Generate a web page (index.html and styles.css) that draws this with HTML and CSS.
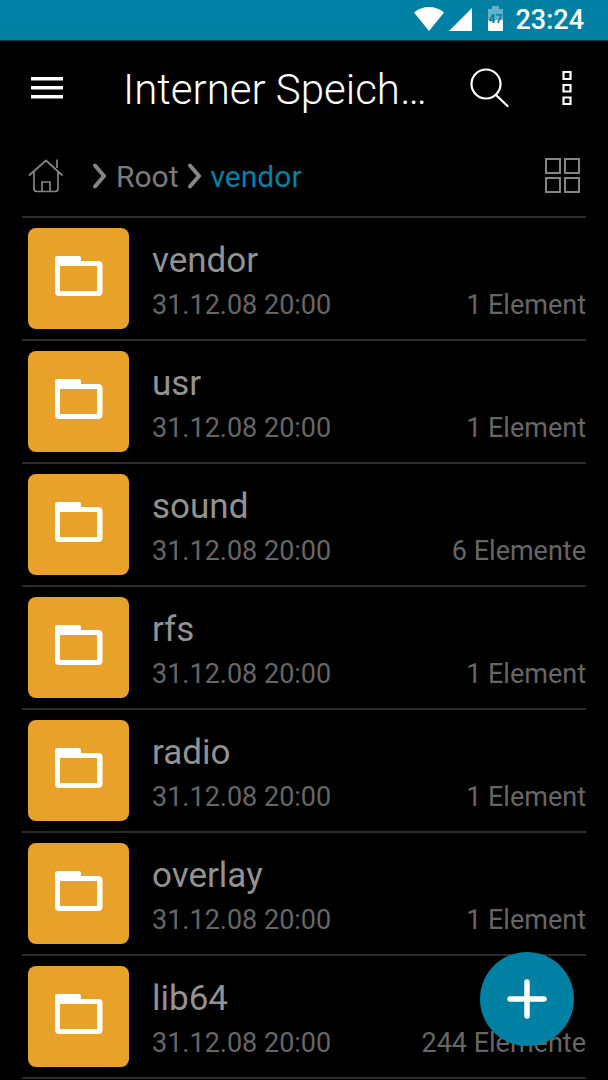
FILE: index.html
```html
<!DOCTYPE html>
<html lang="de">
<head>
<meta charset="utf-8">
<meta name="viewport" content="width=device-width, initial-scale=1">
<title>Interner Speicher</title>
<link rel="stylesheet" href="styles.css">
</head>
<body>
<svg class="sprite" aria-hidden="true">
  <symbol id="folder" viewBox="0 0 48 42">
    <path fill="currentColor" fill-rule="evenodd" d="M2 0H24Q26 0 26 2V5H43Q47.500 5 47.500 9V36Q47.500 40 43 40H4Q0 40 0 36V2Q0 0 2 0ZM5 10V35H42V10Z"/>
  </symbol>
  <symbol id="chevron" viewBox="0 0 16 28">
    <path d="M3 3.500L12 14L3 24.500" fill="none" stroke="currentColor" stroke-width="4" stroke-linecap="round"/>
  </symbol>
</svg>
<div class="status-bar">
  <svg class="wifi" viewBox="0 0 30 24" aria-hidden="true"><path fill="#fff" d="M0 5.500Q6.500 0 15 0T30 5.500L15 24Z"/></svg>
  <svg class="signal" viewBox="0 0 23 23" aria-hidden="true"><path fill="#fff" d="M0 23L23 0V22Q23 23 22 23Z"/></svg>
  <svg class="battery" viewBox="0 0 15 25" role="img" aria-label="Akku 47 %">
    <path fill="#64b1c8" d="M4 0H11V3H15V14H0V3H4Z"/>
    <path fill="#fff" d="M0 14H15V24Q15 25 14 25H1Q0 25 0 24Z"/>
    <text class="battery-level" x="7.500" y="17" text-anchor="middle">47</text>
  </svg>
  <time class="clock">23:24</time>
</div>
<header class="app-bar">
  <button class="icon-button menu-button" type="button" aria-label="Menü">
    <svg width="32" height="22" viewBox="0 0 32 22"><path fill="#fff" d="M0 0H32V3.500H0ZM0 9H32V12.500H0ZM0 18H32V21.500H0Z"/></svg>
  </button>
  <h1 class="title">Interner Speich…</h1>
  <button class="icon-button search-button" type="button" aria-label="Suchen">
    <svg width="40" height="40" viewBox="0 0 40 40" fill="none" stroke="#fff" stroke-width="2.200" stroke-linecap="round"><circle cx="16" cy="16" r="14.500"/><path d="M26 27L37.500 38"/></svg>
  </button>
  <button class="icon-button more-button" type="button" aria-label="Mehr">
    <svg width="10" height="34" viewBox="0 0 10 34" fill="none" stroke="#fff" stroke-width="2.200"><path d="M1.500 1H8.500V8H1.500ZM1.500 14H8.500V20.500H1.500ZM1.500 26.500H8.500V33H1.500Z"/></svg>
  </button>
</header>
<main class="content">
  <div class="path-bar">
    <nav class="breadcrumb" aria-label="Pfad">
      <a class="home" href="#home" aria-label="Start">
        <svg width="36" height="34" viewBox="0 0 36 34" fill="none" stroke="#858585" stroke-width="1.700"><path d="M1 16.500L18 1.500L34.500 16.500M29 .5V9M6 13V29.500Q6 32.500 9 32.500H27Q30 32.500 30 29.500V13M14 32V23H22V32"/></svg>
      </a>
      <svg class="chevron" aria-hidden="true"><use href="#chevron"/></svg>
      <a class="crumb" href="#root">Root</a>
      <svg class="chevron" aria-hidden="true"><use href="#chevron"/></svg>
      <a class="crumb current" href="#vendor" aria-current="page">vendor</a>
    </nav>
    <button class="icon-button" type="button" aria-label="Rasteransicht">
      <svg width="35" height="35" viewBox="0 0 35 35" fill="none" stroke="#858585" stroke-width="2"><path d="M1 1H15V15H1ZM20 1H34V15H20ZM1 20H15V34H1ZM20 20H34V34H20Z"/></svg>
    </button>
  </div>
  <ul class="files">
    <li class="file"><span class="tile"><svg class="folder"><use href="#folder"/></svg></span><div class="info"><a class="name" href="#f1">vendor</a><div class="meta"><span>31.12.08 20:00</span><span>1 Element</span></div></div></li>
    <li class="file"><span class="tile"><svg class="folder"><use href="#folder"/></svg></span><div class="info"><a class="name" href="#f2">usr</a><div class="meta"><span>31.12.08 20:00</span><span>1 Element</span></div></div></li>
    <li class="file"><span class="tile"><svg class="folder"><use href="#folder"/></svg></span><div class="info"><a class="name" href="#f3">sound</a><div class="meta"><span>31.12.08 20:00</span><span>6 Elemente</span></div></div></li>
    <li class="file"><span class="tile"><svg class="folder"><use href="#folder"/></svg></span><div class="info"><a class="name" href="#f4">rfs</a><div class="meta"><span>31.12.08 20:00</span><span>1 Element</span></div></div></li>
    <li class="file"><span class="tile"><svg class="folder"><use href="#folder"/></svg></span><div class="info"><a class="name" href="#f5">radio</a><div class="meta"><span>31.12.08 20:00</span><span>1 Element</span></div></div></li>
    <li class="file"><span class="tile"><svg class="folder"><use href="#folder"/></svg></span><div class="info"><a class="name" href="#f6">overlay</a><div class="meta"><span>31.12.08 20:00</span><span>1 Element</span></div></div></li>
    <li class="file"><span class="tile"><svg class="folder"><use href="#folder"/></svg></span><div class="info"><a class="name" href="#f7">lib64</a><div class="meta"><span>31.12.08 20:00</span><span>244 Elemente</span></div></div></li>
  </ul>
</main>
<button class="fab" type="button" aria-label="Hinzufügen">
  <svg width="40" height="40" viewBox="0 0 40 40" fill="none" stroke="#fff" stroke-width="5.500" stroke-linecap="round"><path d="M20 3V37M3 20H37"/></svg>
</button>
</body>
</html>
```
FILE: styles.css
```css
* {
  box-sizing: border-box;
}

body {
  margin: 0;
  min-height: 100vh;
  background: #000;
  color: #929292;
  font-family: Roboto, "Liberation Sans", sans-serif;
}

svg {
  display: block;
  flex: none;
}

a {
  color: inherit;
  text-decoration: none;
}

.sprite {
  position: absolute;
  width: 0;
  height: 0;
}

.status-bar {
  display: flex;
  align-items: flex-end;
  justify-content: flex-end;
  height: 41px;
  padding: 0 24px 9px 0;
  background: #0080a3;
  border-bottom: 1px solid #00394a;
  color: #fff;
}

.wifi {
  width: 30px;
  height: 24px;
}

.signal {
  width: 23px;
  height: 23px;
  margin-left: 5px;
}

.battery {
  width: 15px;
  height: 25px;
  margin-left: 16px;
}

.battery-level {
  fill: #0080a3;
  font-size: 12px;
  font-weight: 700;
}

.clock {
  margin-left: 12px;
  font-size: 27px;
  font-weight: 500;
  line-height: 22px;
}

.app-bar {
  display: flex;
  align-items: center;
  height: 94px;
  padding: 0 36px 0 31px;
}

.icon-button {
  display: flex;
  padding: 0;
  border: 0;
  background: none;
  cursor: pointer;
}

.title {
  flex: 1;
  min-width: 0;
  margin: 0 0 0 60px;
  padding-top: 4px;
  overflow: hidden;
  color: #fff;
  font-size: 42px;
  font-weight: 300;
  line-height: 56px;
  white-space: nowrap;
}

.more-button {
  margin-left: 52px;
}

.content {
  padding: 0 22px;
}

.path-bar {
  display: flex;
  align-items: center;
  justify-content: space-between;
  height: 83px;
  padding: 0 6px;
  border-bottom: 2px solid #2c2c2c;
}

.breadcrumb {
  display: flex;
  align-items: center;
  color: #7b7b7b;
  font-size: 30px;
  line-height: 40px;
}

.home {
  margin-right: 28px;
}

.chevron {
  width: 16px;
  height: 28px;
  color: #858585;
}

.crumb {
  margin: 0 8px;
  padding-top: 2px;
}

.current {
  color: #0083a8;
}

.files {
  margin: 0;
  padding: 0;
  list-style: none;
}

.file {
  display: flex;
  align-items: center;
  gap: 23px;
  padding: 10px 0 10px 6px;
  border-bottom: 2px solid #2c2c2c;
}

.tile {
  display: flex;
  flex: none;
  justify-content: center;
  width: 101px;
  height: 101px;
  padding-top: 28px;
  border-radius: 8px;
  background: #e8a22a;
  color: #fff;
}

.folder {
  width: 48px;
  height: 42px;
}

.info {
  flex: 1;
  min-width: 0;
  padding-top: 5px;
}

.name {
  display: block;
  font-size: 35px;
  line-height: 48px;
}

.meta {
  display: flex;
  justify-content: space-between;
  color: #666;
  font-size: 27px;
  line-height: 40px;
}

.fab {
  position: fixed;
  right: 34px;
  bottom: 34px;
  display: flex;
  align-items: center;
  justify-content: center;
  width: 94px;
  height: 94px;
  padding: 0;
  border: 0;
  border-radius: 50%;
  background: #0080a3;
  cursor: pointer;
}
```
